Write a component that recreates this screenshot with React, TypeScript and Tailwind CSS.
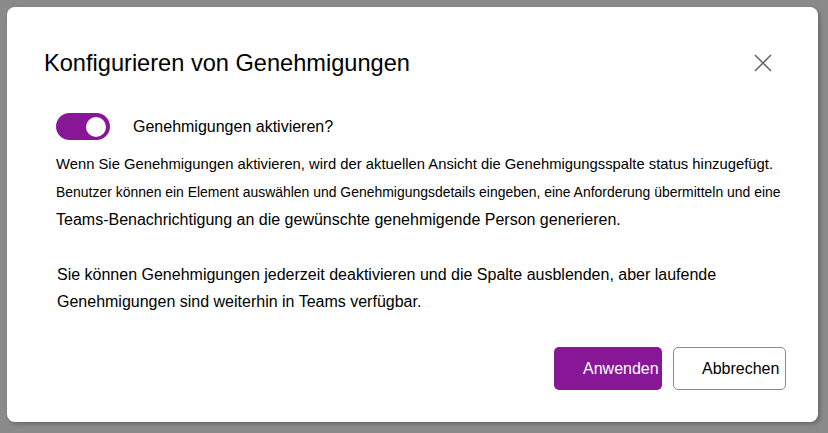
import React from "react";

export default function App() {
  return (
    <div className="w-[828px] h-[433px] bg-[#8a8a8a] pt-[7px] pl-[7px] font-['Liberation_Sans',Arial,sans-serif] text-black">
      <div className="w-[811px] h-[415px] bg-white rounded-[8px] shadow-[2px_2px_4px_rgba(0,0,0,0.25)] flex flex-col">
        {/* header */}
        <div className="flex items-center justify-between pl-[37px] pr-[45px] pt-[42px]">
          <h1 className="text-[23.6px] leading-[28px]">Konfigurieren von Genehmigungen</h1>
          <button className="w-[20px] h-[20px] flex items-center justify-center text-[#616161]">
            <svg width="18" height="18" viewBox="0 0 18 18" fill="none" stroke="currentColor" strokeWidth="1.5">
              <path d="M1 1L17 17M17 1L1 17" />
            </svg>
          </button>
        </div>

        {/* toggle */}
        <div className="flex items-center pl-[49px] mt-[36px]">
          <div className="w-[54px] h-[27px] rounded-full bg-[#881798] flex items-center justify-end pr-[4px]">
            <div className="w-[20px] h-[20px] rounded-full bg-white" />
          </div>
          <span className="ml-[23px] text-[16px] leading-[20px]">Genehmigungen aktivieren?</span>
        </div>

        {/* description */}
        <div className="pl-[49px] mt-[10px]">
          <p className="text-[14.8px] leading-[28px]">
            Wenn Sie Genehmigungen aktivieren, wird der aktuellen Ansicht die Genehmigungsspalte status hinzugefügt.
          </p>
          <p className="text-[13.95px] leading-[28px]">
            Benutzer können ein Element auswählen und Genehmigungsdetails eingeben, eine Anforderung übermitteln und eine
          </p>
          <p className="text-[16px] leading-[28px]">
            Teams-Benachrichtigung an die gewünschte genehmigende Person generieren.
          </p>
          <p className="text-[16px] leading-[27px] mt-[27px] pl-[1px]">
            Sie können Genehmigungen jederzeit deaktivieren und die Spalte ausblenden, aber laufende
            <br />
            Genehmigungen sind weiterhin in Teams verfügbar.
          </p>
        </div>

        {/* footer */}
        <div className="flex justify-end gap-[11px] pr-[32px] mt-auto mb-[32px]">
          <button className="w-[108px] h-[43px] rounded-[5px] bg-[#881798] text-white text-[16px] text-left pl-[29px]">
            Anwenden
          </button>
          <button className="w-[113px] h-[43px] rounded-[5px] border border-[#8a8a8a] bg-white text-black text-[16px] text-left pl-[28px]">
            Abbrechen
          </button>
        </div>
      </div>
    </div>
  );
}
